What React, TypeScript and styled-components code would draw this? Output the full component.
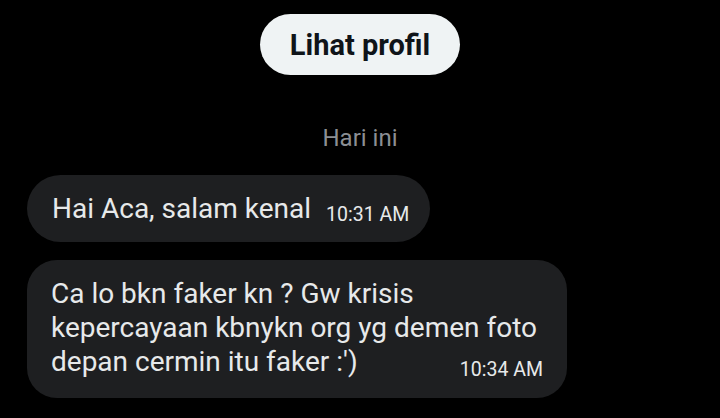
import React from 'react';
import styled, { createGlobalStyle, css } from 'styled-components';

const Global = createGlobalStyle`
  html, body { margin: 0; padding: 0; background: #000; }
  body { font-family: Roboto, "Liberation Sans", sans-serif; -webkit-font-smoothing: antialiased; }
`;

const Page = styled.main`
  width: 720px;
  height: 418px;
  overflow: hidden;
  background: #000;
  box-sizing: border-box;
  padding-top: 14px;
  display: flex;
  flex-direction: column;
`;

const Header = styled.header`
  display: flex;
  flex-direction: column;
  align-items: center;
`;

const ProfileButton = styled.button`
  height: 61px;
  padding: 0 30px;
  border: none;
  border-radius: 31px;
  background: #eff3f4;
  color: #0f1419;
  font-family: Roboto, "Liberation Sans", sans-serif;
  font-weight: 700;
  font-size: 29px;
  cursor: pointer;
`;

const DayLabel = styled.div`
  margin-top: 49px;
  font-size: 24px;
  line-height: 28px;
  color: #8b8f94;
`;

const Thread = styled.section`
  display: flex;
  flex-direction: column;
  align-items: flex-start;
  gap: 18px;
  padding: 23px 27px 0;
`;

const Bubble = styled.div<{ $multi?: boolean }>`
  display: flow-root;
  box-sizing: border-box;
  max-width: 540px;
  background: #1e1f21;
  color: #e7e9ea;
  font-size: 28px;
  line-height: 34px;
  ${(p) =>
    p.$multi
      ? css`
          padding: 17px 24px 18px 24px;
          border-radius: 30px;
        `
      : css`
          padding: 16.5px 21px 16.5px 25px;
          border-radius: 34px;
        `}
`;

const Time = styled.span<{ $float?: boolean }>`
  font-size: 19.5px;
  line-height: 20px;
  color: #e7e9ea;
  margin-left: 15px;
  ${(p) =>
    p.$float
      ? css`
          float: right;
          margin-top: 15px;
        `
      : css`
          vertical-align: -3px;
        `}
`;

export default function App() {
  return (
    <>
      <Global />
      <Page>
        <Header>
          <ProfileButton>Lihat profil</ProfileButton>
          <DayLabel>Hari ini</DayLabel>
        </Header>
        <Thread>
          <Bubble>
            Hai Aca, salam kenal<Time>10:31 AM</Time>
          </Bubble>
          <Bubble $multi>
            Ca lo bkn faker kn ? Gw krisis kepercayaan kbnykn org yg demen foto depan cermin itu faker :')
            <Time $float>10:34 AM</Time>
          </Bubble>
        </Thread>
      </Page>
    </>
  );
}
